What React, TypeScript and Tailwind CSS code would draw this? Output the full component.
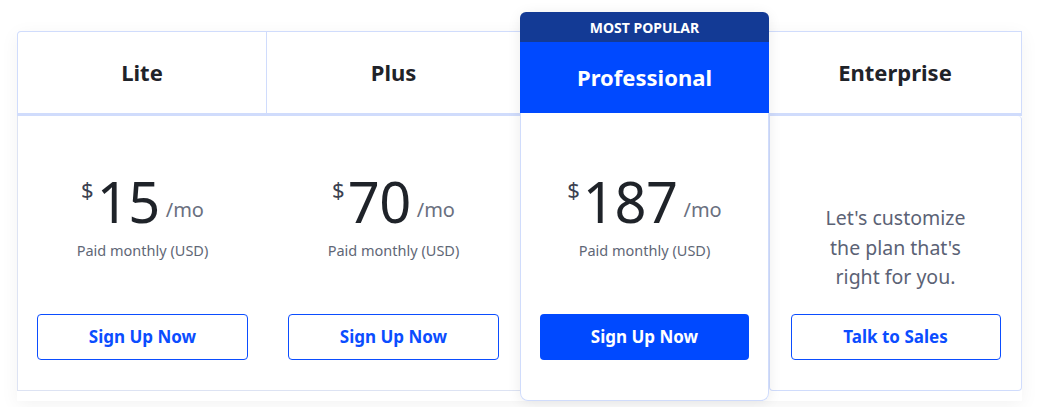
import React from "react"

function Price({ value }: { value: string }) {
  return (
    <div className="flex flex-col items-center">
      <div className="flex items-start text-[#1f2329]">
        <span className="mt-[5px] mr-[3px] text-[22px] leading-none text-[#3b4150]">$</span>
        <span className="text-[56px] font-normal leading-none tracking-[-0.5px]">{value}</span>
        <span className="ml-[6px] mt-[27px] text-[20px] leading-none text-[#6a7080]">/mo</span>
      </div>
      <p className="mt-[11px] text-[14.5px] leading-[20px] text-[#5f6776]">Paid monthly (USD)</p>
    </div>
  )
}

function OutlineButton({ label, width }: { label: string; width: string }) {
  return (
    <button
      type="button"
      className={`${width} h-[46px] rounded-[4px] border border-[#0b4dff] bg-white text-[17px] font-bold text-[#0b4dff]`}
    >
      {label}
    </button>
  )
}

export default function App() {
  return (
    <div
      className="h-[407px] w-[1049px] bg-white"
      style={{ fontFamily: '"Noto Sans", "Open Sans", sans-serif' }}
    >
      <div className="ml-[17px] pt-[31px]">
        <div className="flex w-[1005px] items-start shadow-[0_4px_18px_rgba(0,0,0,0.05)]">
          {/* Lite */}
          <div className="flex w-[250px] flex-col">
            <div className="flex h-[85px] items-center justify-center rounded-tl-[4px] border-l border-t border-r border-b-[3px] border-[#d0dcfc] bg-white">
              <h3 className="text-[22px] font-bold text-[#1f2329]">Lite</h3>
            </div>
            <div className="flex h-[275px] flex-col items-center border-b border-l border-[#dde3f3] bg-white pt-[57px] pb-[30px]">
              <Price value="15" />
              <div className="mt-auto">
                <OutlineButton label="Sign Up Now" width="w-[211px]" />
              </div>
            </div>
          </div>

          {/* Plus */}
          <div className="flex w-[253px] flex-col">
            <div className="flex h-[85px] items-center justify-center border-t border-b-[3px] border-[#d0dcfc] bg-white">
              <h3 className="text-[22px] font-bold text-[#1f2329]">Plus</h3>
            </div>
            <div className="flex h-[275px] flex-col items-center border-b border-[#dde3f3] bg-white pt-[57px] pb-[30px]">
              <Price value="70" />
              <div className="mt-auto">
                <OutlineButton label="Sign Up Now" width="w-[211px]" />
              </div>
            </div>
          </div>

          {/* Professional */}
          <div className="relative z-10 -mt-[19px] flex w-[249px] flex-col rounded-[8px] shadow-[0_2px_14px_rgba(0,0,0,0.08)]">
            <div className="flex h-[30px] items-center justify-center rounded-t-[6px] bg-[#133a95]">
              <span className="text-[14px] font-bold text-white">MOST POPULAR</span>
            </div>
            <div className="flex h-[71px] items-center justify-center bg-[#0049ff]">
              <h3 className="text-[22px] font-bold text-white">Professional</h3>
            </div>
            <div className="flex h-[288px] flex-col items-center rounded-b-[8px] border-x border-b border-[#d0dcfc] bg-white pt-[60px] pb-[40px]">
              <Price value="187" />
              <div className="mt-auto">
                <button
                  type="button"
                  className="h-[46px] w-[209px] rounded-[4px] bg-[#0049ff] text-[17px] font-bold text-white"
                >
                  Sign Up Now
                </button>
              </div>
            </div>
          </div>

          {/* Enterprise */}
          <div className="flex w-[253px] flex-col">
            <div className="flex h-[85px] items-center justify-center border-t border-r border-b-[3px] border-[#d0dcfc] bg-white">
              <h3 className="text-[22px] font-bold text-[#1f2329]">Enterprise</h3>
            </div>
            <div className="flex h-[275px] flex-col items-center rounded-b-[4px] rounded-tr-[4px] border border-t-0 border-[#d0dcfc] bg-white pt-[87px] pb-[30px]">
              <p className="text-center text-[19.5px] leading-[29.5px] text-[#5b6275]">
                Let's customize
                <br />
                the plan that's
                <br />
                right for you.
              </p>
              <div className="mt-auto">
                <OutlineButton label="Talk to Sales" width="w-[210px]" />
              </div>
            </div>
          </div>
        </div>
      </div>
    </div>
  )
}
